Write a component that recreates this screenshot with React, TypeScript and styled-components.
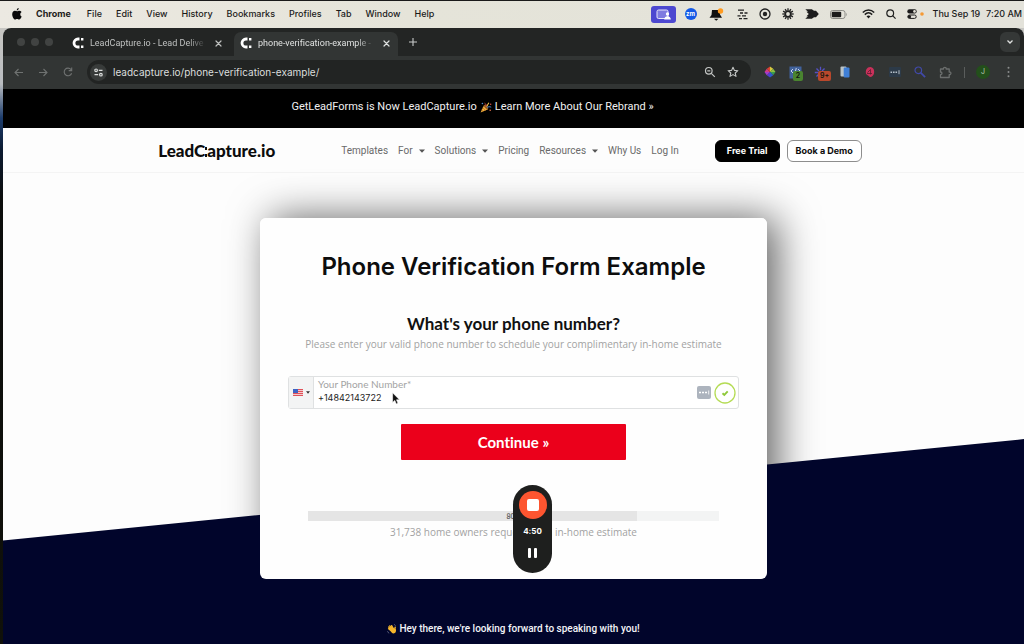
import React from "react";
import styled, { createGlobalStyle } from "styled-components";

const GlobalStyle = createGlobalStyle`
  *, *::before, *::after { box-sizing: border-box; }
  body { margin: 0; background: #0b0b0b; font-family: Inter, "Liberation Sans", sans-serif; font-variant-ligatures: none; }
  button, input { font: inherit; color: inherit; border: 0; padding: 0; background: none; }
  a { color: inherit; text-decoration: none; }
  h1, h2, p { margin: 0; }
  svg { display: block; flex: none; }
`;

const Desktop = styled.div`
  position: relative;
  min-height: 100vh;
  display: flex;
  flex-direction: column;
  background: linear-gradient(180deg, #cfccc4 0, #b9bcc0 84px, #1c3c6c 118px, #0b1a30 150px, #0c0d0c 200px, #10110a 100%);
`;

/* macOS menu bar */
const MenuBar = styled.header`
  display: flex;
  align-items: center;
  justify-content: space-between;
  height: 28px;
  padding: 0 2px 1px 12px;
  border-top: 1px solid #1a1a1a;
  background: linear-gradient(90deg, #ece9e2, #e5e4d9 40%, #e3e2da);
  color: #1b1b1a;
  font-size: 9px;
  font-weight: 500;
  line-height: 12px;
`;

const MenuItems = styled.nav`
  display: flex;
  align-items: center;
  gap: 14px;
`;

const MenuItem = styled.button<{ $app?: boolean }>`
  margin-right: ${(p) => (p.$app ? 2 : 0)}px;
  font-weight: ${(p) => (p.$app ? 700 : 500)};
`;

const StatusItems = styled.div`
  display: flex;
  align-items: center;
  gap: 11px;
`;

const ShareBadge = styled.span`
  display: grid;
  place-items: center;
  width: 25px;
  height: 17px;
  margin-right: -2px;
  border-radius: 3px;
  background: #4d48d0;
`;

const ZoomBadge = styled.span`
  display: grid;
  place-items: center;
  width: 12px;
  height: 12px;
  margin-right: 1px;
  border-radius: 50%;
  background: #1459e6;
  color: #fff;
  font-size: 6px;
  font-weight: 700;
  line-height: 8px;
`;

const Bell = styled.svg`
  margin-right: 2px;
`;

const Battery = styled.svg`
  margin-right: 3px;
`;

const Control = styled.span`
  display: flex;
  align-items: center;
  gap: 3px;
  margin-right: -2px;
`;

const Clock = styled.time`
  display: flex;
  gap: 6px;
  white-space: nowrap;
`;

/* Browser window */
const Browser = styled.div`
  display: flex;
  flex-direction: column;
  flex: 1;
  margin-left: 3px;
  border-radius: 8px 8px 0 0;
  background: #fdfdfd;
  overflow: hidden;
`;

const TabStrip = styled.div`
  display: flex;
  align-items: center;
  height: 28px;
  padding: 0 4px 0 14px;
  background: #232524;
  color: #c9cbca;
`;

const WindowDots = styled.div`
  display: flex;
  gap: 6px;
`;

const WindowDot = styled.i`
  width: 8px;
  height: 8px;
  border-radius: 50%;
  background: #414342;
`;

const Tabs = styled.div`
  display: flex;
  gap: 4px;
  margin: 4px 0 0 13px;
`;

const Tab = styled.div<{ $active?: boolean }>`
  display: flex;
  align-items: center;
  gap: 6px;
  width: 164px;
  height: 24px;
  padding: 0 6px 2px;
  border-radius: 7px 7px 0 0;
  background: ${(p) => (p.$active ? "#323534" : "transparent")};
  color: ${(p) => (p.$active ? "#dfe1e0" : "#bfc1c0")};
`;

const TabTitle = styled.span`
  flex: 1;
  overflow: hidden;
  white-space: nowrap;
  font-family: Roboto, "Liberation Sans", sans-serif;
  font-size: 9px;
  line-height: 14px;
  mask-image: linear-gradient(90deg, #000 85%, transparent);
`;

const IconButton = styled.button`
  display: grid;
  place-items: center;
  width: 12px;
  height: 12px;
`;

const NewTab = styled(IconButton)`
  margin: 0 auto 0 9px;
`;

const TabSearch = styled(IconButton)`
  width: 20px;
  height: 20px;
  border-radius: 6px;
  background: #353837;
`;

const Toolbar = styled.div`
  display: flex;
  align-items: center;
  height: 33px;
  padding: 0 9px 1px;
  background: #323534;
  color: #6f7271;
`;

const NavButtons = styled.div`
  display: flex;
  gap: 13px;
  margin-right: 13px;
`;

const Omnibox = styled.div`
  display: flex;
  align-items: center;
  flex: 1;
  gap: 11px;
  height: 24px;
  padding: 0 12px 0 3px;
  border-radius: 12px;
  background: #222423;
  color: #c4c6c5;
`;

const SiteInfo = styled.button`
  display: grid;
  place-items: center;
  width: 17px;
  height: 17px;
  border-radius: 50%;
  background: #383b3a;
`;

const Url = styled.input`
  flex: 1;
  min-width: 0;
  margin-left: -5px;
  font-size: 10px;
  line-height: 14px;
  color: #dcdedd;
  outline: 0;
`;

const Extensions = styled.div`
  display: flex;
  align-items: center;
  gap: 11px;
  margin-left: 12px;
`;

const Extension = styled.span`
  position: relative;
  display: grid;
  place-items: center;
  width: 14px;
  height: 14px;
`;

const Count = styled.span<{ $color: string }>`
  position: absolute;
  top: 6px;
  left: 5px;
  min-width: 10px;
  padding: 0 2px;
  border-radius: 2px;
  background: ${(p) => p.$color};
  color: #10150f;
  font-size: 7px;
  font-weight: 600;
  line-height: 10px;
  text-align: center;
`;

const Divider = styled.i`
  width: 1px;
  height: 11px;
  margin-left: 1px;
  background: #5a5d5c;
`;

const Avatar = styled.button`
  width: 14px;
  height: 14px;
  border-radius: 50%;
  background: #234f1b;
  color: #b5c7b0;
  font-size: 7px;
  line-height: 14px;
  text-align: center;
`;

/* Page */
const Announcement = styled.a`
  display: flex;
  align-items: center;
  justify-content: center;
  gap: 3px;
  height: 39px;
  padding: 0 82px 4px 0;
  background: #000;
  color: #f0f0f0;
  font-family: Roboto, "Liberation Sans", sans-serif;
  font-size: 11px;
  line-height: 17px;
`;

const SiteHeader = styled.header`
  height: 45px;
  border-bottom: 1px solid #f4f4f4;
`;

const HeaderInner = styled.div`
  display: flex;
  align-items: center;
  justify-content: space-between;
  width: 70%;
  min-width: 704px;
  height: 100%;
  margin: 0 auto;
  padding: 2px 9px 0 2px;
`;

const Logo = styled.a`
  display: flex;
  align-items: center;
  color: #0c0c0c;
  font-family: Lato, "Liberation Sans", sans-serif;
  font-size: 17px;
  font-weight: 900;
  line-height: 20px;
`;

const LogoDots = styled.i`
  display: flex;
  flex-direction: column;
  justify-content: space-between;
  height: 10px;
  margin-top: 2px;

  &::before, &::after {
    content: "";
    width: 2px;
    height: 3px;
    background: currentColor;
  }
`;

const SiteNav = styled.nav`
  display: flex;
  gap: 10px;
  margin-left: 30px;
  color: #6a6a6a;
  font-family: Roboto, "Liberation Sans", sans-serif;
  font-size: 10px;
  line-height: 14px;
`;

const NavLink = styled.a`
  display: flex;
  align-items: center;
  gap: 6px;
`;

const HeaderActions = styled.div`
  display: flex;
  gap: 7px;
`;

const HeaderButton = styled.button<{ $solid?: boolean }>`
  height: 22px;
  padding: 0 ${(p) => (p.$solid ? 11 : 8)}px;
  border: 1px solid ${(p) => (p.$solid ? "#000" : "#8d8d8d")};
  border-radius: 6px;
  background: ${(p) => (p.$solid ? "#000" : "#fff")};
  color: ${(p) => (p.$solid ? "#fff" : "#0c0c0c")};
  font-size: 9px;
  font-weight: 700;
  line-height: 14px;
`;

const Hero = styled.main`
  position: relative;
  isolation: isolate;
  display: flex;
  flex-direction: column;
  align-items: center;
  flex: 1;
  padding: 45px 0 7px;

  &::before {
    content: "";
    position: absolute;
    inset: 0;
    z-index: -1;
    background: #01052b;
    clip-path: polygon(0 78%, 100% 56.5%, 100% 100%, 0 100%);
  }
`;

/* The card's shadow lies on the white backdrop, below the navy slope */
const Card = styled.form`
  position: relative;
  display: flex;
  flex-direction: column;
  align-items: center;
  width: 100%;
  max-width: 507px;
  padding: 32px 28px 39px;
  border-radius: 6px;
  background: #fefefe;
  font-family: Lato, "Liberation Sans", sans-serif;

  &::after {
    content: "";
    position: absolute;
    inset: 0;
    z-index: -2;
    border-radius: 6px;
    box-shadow: 10px 0 40px rgba(0, 0, 0, 0.62);
  }
`;

const Title = styled.h1`
  color: #0d0d0d;
  font-family: Inter, "Liberation Sans", sans-serif;
  font-size: 24px;
  font-weight: 600;
  line-height: 34px;
`;

const Question = styled.h2`
  margin-top: 30px;
  color: #111;
  font-size: 17px;
  font-weight: 700;
  line-height: 20px;
`;

const Hint = styled.p`
  margin-top: 2px;
  color: #a2a2a2;
  font-family: "Open Sans", "Liberation Sans", sans-serif;
  font-size: 10px;
  line-height: 16px;
`;

const PhoneField = styled.div`
  display: flex;
  align-items: center;
  width: 100%;
  height: 33px;
  margin-top: 24px;
  padding-right: 2px;
  border: 1px solid #dfe1e2;
  border-radius: 3px;
  background: #fff;
`;

const CountryButton = styled.button`
  display: flex;
  align-items: center;
  justify-content: center;
  gap: 3px;
  align-self: stretch;
  width: 25px;
  border-right: 1px solid #dfe1e2;
  background: #f3f4f4;
`;

const PhoneText = styled.div`
  display: flex;
  flex-direction: column;
  align-self: flex-start;
  flex: 1;
  padding-left: 4px;
`;

const PhoneLabel = styled.label`
  color: #a3a3a3;
  font-size: 10px;
  line-height: 14px;
`;

const PhoneInput = styled.input`
  height: 13px;
  color: #222;
  font-family: Inter, "Liberation Sans", sans-serif;
  font-size: 9px;
  line-height: 13px;
  outline: 0;
`;

const FieldIcons = styled.div`
  display: flex;
  align-items: center;
  gap: 3px;
`;

const Continue = styled.button`
  width: 50%;
  height: 36px;
  margin-top: 15px;
  border-radius: 1px;
  background: #eb001b;
  color: #fff;
  font-size: 15px;
  font-weight: 700;
  line-height: 20px;
`;

const Progress = styled.div`
  display: grid;
  align-items: center;
  width: 91%;
  height: 10px;
  margin-top: 51px;
  background: linear-gradient(90deg, #e5e5e5 80%, #f3f4f4 80%);
  color: #666;
  font-size: 7px;
  font-weight: 700;
  line-height: 10px;
  text-align: center;
`;

const Stat = styled(Hint)`
  margin-top: 3px;
`;

const Greeting = styled.p`
  display: flex;
  align-items: center;
  gap: 2px;
  margin-top: auto;
  color: #f3f4f8;
  font-family: Roboto, "Liberation Sans", sans-serif;
  font-size: 10px;
  font-weight: 500;
  line-height: 16px;
`;

/* Floating overlays */
const Recorder = styled.div`
  position: absolute;
  top: 485px;
  left: calc(50% + 1px);
  display: flex;
  flex-direction: column;
  align-items: center;
  width: 39px;
  height: 88px;
  padding: 6px 0;
  border-radius: 20px;
  background: #1e1f1e;
  color: #fff;
  font-size: 8px;
  font-weight: 700;
  line-height: 12px;
`;

const StopButton = styled.button`
  display: grid;
  place-items: center;
  width: 28px;
  height: 28px;
  margin-bottom: 6px;
  border-radius: 50%;
  background: #fd5530;

  &::before {
    content: "";
    width: 12px;
    height: 12px;
    border-radius: 2px;
    background: #fff;
  }
`;

const PauseButton = styled.button`
  display: flex;
  gap: 3px;
  margin-top: 11px;

  &::before, &::after {
    content: "";
    width: 3px;
    height: 10px;
    border-radius: 1px;
    background: #fff;
  }
`;

const Pointer = styled.svg`
  position: absolute;
  top: 392px;
  left: calc(50% - 120px);
`;

const Close = () => (
  <svg width="7" height="7" viewBox="0 0 7 7" stroke="currentColor" strokeWidth="1.2" strokeLinecap="round">
    <path d="M1 1l5 5M6 1L1 6" />
  </svg>
);

const Favicon = () => (
  <svg width="12" height="12" viewBox="0 0 12 12">
    <path d="M7.5 0.6H6a5.4 5.4 0 0 0 0 10.8h1.5V8.6H6a2.6 2.6 0 0 1 0-5.2h1.5z" fill="#fff" />
    <path d="M9 1h2.4v2.4H9zM9 8.6h2.4V11H9z" fill="#fff" />
  </svg>
);

const Caret = () => (
  <svg width="6" height="4" viewBox="0 0 6 4">
    <path d="M0 0.4h6L3 3.7z" fill="#555" />
  </svg>
);

const Party = () => (
  <svg width="12" height="12" viewBox="0 0 12 12">
    <path d="M0.6 11.4L4 4.2l4 4z" fill="#f2b23a" />
    <path d="M1.7 9l1.5 1.4M2.8 6.8l2.8 2.7" stroke="#c9762b" strokeWidth="0.9" />
    <ellipse cx="6" cy="6.1" rx="1.2" ry="2.9" transform="rotate(-45 6 6.1)" fill="#9b5d24" />
    <path d="M6.2 5.4c.2-1.6-.4-2.4-1.5-3.2" stroke="#e3554a" fill="none" strokeWidth="1" />
    <path d="M6.9 5.6c.5-1.8 1.2-2.6 2-3.9" stroke="#f4c44c" fill="none" strokeWidth="1.1" />
    <path d="M7.2 6.4c1.5-.9 2.7-.8 4-.2" stroke="#4d8fd8" fill="none" strokeWidth="1" />
    <circle cx="2.4" cy="2.5" r=".8" fill="#4d8fd8" />
    <circle cx="10.7" cy="3.3" r=".7" fill="#e3554a" />
    <circle cx="10.2" cy="9.2" r=".8" fill="#e3704a" />
  </svg>
);

const Wave = () => (
  <svg width="10" height="10" viewBox="0 0 10 10">
    <g stroke="#f5b62c" strokeWidth="1.4" strokeLinecap="round">
      <path d="M5 6L1.7 2.9M5.6 5.2L2.8 1.9M6.4 4.8L4.6 1.7M4.4 7L1.6 4.8M7.8 5.6l.4-2.5" />
    </g>
    <path d="M3.4 6.2L6 3.8l2.8 1.4c.7 2.2-.3 4.1-2.2 4.3-1.5.1-2.6-1.5-3.2-3.3z" fill="#f5b62c" />
    <path d="M.5 7.2c.2 1 .8 1.7 1.700 2M7 .5c.8.2 1.3.6 1.6 1.2" stroke="#8b8fa8" strokeWidth=".6" fill="none" />
  </svg>
);

const Apple = () => (
  <svg width="10" height="12" viewBox="0 0 10 12" fill="#0a0a0a">
    <path d="M6.7 0c.1 1.2-.8 2.4-2 2.5C4.6 1.3 5.6.2 6.7 0zM8.3 6.3c0-1.1.6-1.8 1.3-2.3-.6-.8-1.4-1.2-2.3-1.2-1 0-1.5.5-2.2.5-.7 0-1.3-.5-2.2-.5C1.4 2.8.2 4.1.2 6.3c0 2.4 1.5 5.3 2.9 5.3.7 0 1.1-.5 2-.5s1.2.5 2 .5c1.1 0 2.1-1.7 2.6-3-.9-.4-1.4-1.2-1.4-2.3z" />
  </svg>
);

const menus = ["File", "Edit", "View", "History", "Bookmarks", "Profiles", "Tab", "Window", "Help"];

const links: { label: string; menu?: boolean }[] = [
  { label: "Templates" },
  { label: "For", menu: true },
  { label: "Solutions", menu: true },
  { label: "Pricing" },
  { label: "Resources", menu: true },
  { label: "Why Us" },
  { label: "Log In" },
];

const rays = [0, 45, 90, 135, 180, 225, 270, 315];
const fineRays = [0, 30, 60, 90, 120, 150, 180, 210, 240, 270, 300, 330];

const StatusIcons = () => (
  <StatusItems>
    <ShareBadge>
      <svg width="15" height="11" viewBox="0 0 15 11">
        <rect x="1" y="1" width="11" height="8.5" rx="1.5" fill="#7f7be0" stroke="#e8e7fb" />
        <circle cx="11.5" cy="5" r="1.7" fill="#fff" />
        <path d="M8.2 10.5c0-2 1.3-3.3 3.3-3.3s3.3 1.3 3.3 3.3z" fill="#fff" />
      </svg>
    </ShareBadge>
    <ZoomBadge>zm</ZoomBadge>
    <Bell width="15" height="13" viewBox="0 0 15 13">
      <path d="M3 2h8v4.5L13 9.7H.5L2.500 7z" fill="#111" />
      <path d="M5 10.8h4.5L7.2 12.8z" fill="#111" />
      <circle cx="11.5" cy="3" r="2.7" fill="#ff9a1f" />
    </Bell>
    <svg width="11" height="11" viewBox="0 0 11 11" stroke="#222" strokeWidth="1.3">
      <path d="M1 1.2h6M3 4h3M7.5 4H10.5M.5 6.8h3M5 6.8h4M2 9.7h3M6.5 9.7h4" />
    </svg>
    <svg width="12" height="12" viewBox="0 0 12 12">
      <circle cx="6" cy="6" r="5" fill="none" stroke="#222" strokeWidth="1.3" />
      <circle cx="6" cy="6" r="2.2" fill="#222" />
    </svg>
    <svg width="12" height="12" viewBox="0 0 12 12" fill="none" stroke="#222" strokeWidth="1.3">
      <circle cx="6" cy="6" r="2.7" strokeWidth="1.6" />
      {fineRays.map((a) => (
        <path key={a} d="M6 .3v3" transform={`rotate(${a} 6 6)`} />
      ))}
    </svg>
    <svg width="14" height="10" viewBox="0 0 14 10" fill="#1c1c1c">
      <path d="M.3.3h6.5l2.2 1.5h2L13.8 5 11 8.2H9L6.8 9.7H.3L3 7.3H1.5L3.8 5 1.5 2.7H3z" />
    </svg>
    <Battery width="18" height="9" viewBox="0 0 18 9">
      <rect x=".5" y=".5" width="14.5" height="8" rx="2.2" fill="none" stroke="#8a8a85" />
      <rect x="1.7" y="1.7" width="9.5" height="5.6" rx="1" fill="#1c1c1c" />
      <path d="M16.300 3v3c.9-.3.9-2.7 0-3z" fill="#8a8a85" />
    </Battery>
    <svg width="13" height="10" viewBox="0 0 13 10" fill="none" stroke="#1c1c1c" strokeWidth="1.5">
      <path d="M.8 3.5c3.3-3.200 8.1-3.200 11.4 0M2.8 5.6c2.2-2.1 5.2-2.1 7.4 0" />
      <path d="M4.5 7.3c1.2-1 2.8-1 4 0l-2 2.2z" fill="#1c1c1c" stroke="none" />
    </svg>
    <svg width="10" height="10" viewBox="0 0 10 10" fill="none" stroke="#222" strokeWidth="1.2">
      <circle cx="4.2" cy="4.2" r="3.4" />
      <path d="M6.8 6.8l2.8 2.8" />
    </svg>
    <Control>
      <svg width="10" height="10" viewBox="0 0 10 10">
        <rect x=".3" y=".3" width="9.4" height="4.2" rx="2.1" fill="#1c1c1c" />
        <circle cx="7.5" cy="2.4" r="1.3" fill="#e4e3da" />
        <rect x=".8" y="6" width="8.4" height="3.4" rx="1.7" fill="none" stroke="#1c1c1c" />
        <circle cx="2.5" cy="7.7" r="1.6" fill="#1c1c1c" />
      </svg>
      <svg width="4" height="4" viewBox="0 0 4 4">
        <circle cx="2" cy="2" r="1.8" fill="#f59a35" />
      </svg>
    </Control>
    <Clock>
      <span>Thu Sep 19</span>
      <span>7:20 AM</span>
    </Clock>
  </StatusItems>
);

const ExtensionIcons = () => (
  <Extensions>
    <Extension>
      <svg width="12" height="12" viewBox="0 0 12 12">
        <path d="M6 6V.5L9.2 2.8z" fill="#d8c840" />
        <path d="M6 6l3.2-3.2L11.5 6z" fill="#8dc043" />
        <path d="M6 6h5.5L9.2 9.2z" fill="#3a9b50" />
        <path d="M6 6l3.2 3.2L6 11.5z" fill="#3159d0" />
        <path d="M6 6v5.5L2.8 9.2z" fill="#4f3ed0" />
        <path d="M6 6L2.8 9.2.5 6z" fill="#a43cc8" />
        <path d="M6 6H.5L2.8 2.8z" fill="#cf3a88" />
        <path d="M6 6L2.8 2.8 6 .5z" fill="#d9432f" />
      </svg>
    </Extension>
    <Extension>
      <svg width="13" height="13" viewBox="0 0 13 13">
        <rect x=".5" y=".5" width="12" height="12" fill="#41629c" />
        <path d="M4 3L2 5l2 2M9 3l2 2-2 2M7.3 2L5.7 8" stroke="#c9d4e8" fill="none" />
      </svg>
      <Count $color="#4a8430">2</Count>
    </Extension>
    <Extension>
      <svg width="13" height="13" viewBox="0 0 13 13" stroke="#5551c4" strokeWidth="1.3">
        {rays.map((a) => (
          <path key={a} d="M6.5 .8v3.5" transform={`rotate(${a} 6.5 6.5)`} />
        ))}
      </svg>
      <Count $color="#b8482c">9+</Count>
    </Extension>
    <Extension>
      <svg width="10" height="12" viewBox="0 0 10 12">
        <rect x=".5" y=".5" width="6" height="10" rx="1" fill="#b9c3c8" />
        <rect x="3.7" y="1.5" width="5.8" height="10" rx="1" fill="#3f7fd6" />
      </svg>
    </Extension>
    <Extension>
      <svg width="10" height="12" viewBox="0 0 10 12">
        <path d="M3 1.5C5 .3 8 1 8.8 3.5c.8 2.6.3 5-1.3 6.6-1.3 1.3-3 1.2-3.8 0L1 8C.5 5 1 2.8 3 1.5z" fill="#c9315a" />
        <path d="M2 7.5h5M5.5 3.5v5M5.5 3.5L2.5 6.5" stroke="#5c1c32" fill="none" strokeWidth=".8" />
      </svg>
    </Extension>
    <Extension>
      <svg width="12" height="10" viewBox="0 0 12 10">
        <rect width="12" height="10" rx="1" fill="#2c3a48" />
        <path d="M1.5 5.2h1.6M4 5.2h1.6M6.5 5.2h1.6" stroke="#b4bfc8" strokeWidth="1.6" />
        <path d="M10 3.2v4" stroke="#b4bfc8" />
      </svg>
    </Extension>
    <Extension>
      <svg width="12" height="12" viewBox="0 0 12 12" fill="none" stroke="#4149a8">
        <circle cx="4.3" cy="4.3" r="3.3" strokeWidth="1.2" />
        <path d="M6.9 6.9l4.2 4.2" strokeWidth="1.8" />
      </svg>
    </Extension>
    <Extension>
      <svg width="13" height="13" viewBox="0 0 13 13" fill="none" stroke="#6b6e6d" strokeWidth="1.3" strokeLinejoin="round">
        <path d="M1.5 3h3c-.3-2.3 3-2.3 2.700 0h3v3c2.3-.3 2.3 3 0 2.7v2.8H1.500V8.7c2-.2 2-2.5 0-2.7z" />
      </svg>
    </Extension>
    <Divider />
    <Avatar type="button">J</Avatar>
    <Extension>
      <svg width="3" height="12" viewBox="0 0 3 12" fill="#8a8d8c">
        <circle cx="1.5" cy="1.8" r="1" />
        <circle cx="1.5" cy="6" r="1" />
        <circle cx="1.5" cy="10.2" r="1" />
      </svg>
    </Extension>
  </Extensions>
);

export default function App() {
  return (
    <Desktop>
      <GlobalStyle />
      <MenuBar>
        <MenuItems>
          <Apple />
          <MenuItem $app>Chrome</MenuItem>
          {menus.map((m) => (
            <MenuItem key={m}>{m}</MenuItem>
          ))}
        </MenuItems>
        <StatusIcons />
      </MenuBar>

      <Browser>
        <TabStrip>
          <WindowDots>
            <WindowDot />
            <WindowDot />
            <WindowDot />
          </WindowDots>
          <Tabs>
            <Tab>
              <Favicon />
              <TabTitle>LeadCapture.io - Lead Delive</TabTitle>
              <IconButton aria-label="Close tab"><Close /></IconButton>
            </Tab>
            <Tab $active>
              <Favicon />
              <TabTitle>phone-verification-example -</TabTitle>
              <IconButton aria-label="Close tab"><Close /></IconButton>
            </Tab>
          </Tabs>
          <NewTab aria-label="New tab">
            <svg width="8" height="8" viewBox="0 0 8 8" stroke="currentColor" strokeWidth="1.1">
              <path d="M4 0v8M0 4h8" />
            </svg>
          </NewTab>
          <TabSearch aria-label="Search tabs">
            <svg width="6" height="4" viewBox="0 0 6 4" fill="none" stroke="#dfe1e0" strokeWidth="1.3">
              <path d="M.5.5L3 3 5.5.5" />
            </svg>
          </TabSearch>
        </TabStrip>

        <Toolbar>
          <NavButtons>
            <IconButton aria-label="Back">
              <svg width="9" height="9" viewBox="0 0 9 9" fill="none" stroke="currentColor" strokeWidth="1.1">
                <path d="M9 4.5H1M4.5 1L1 4.5 4.5 8" />
              </svg>
            </IconButton>
            <IconButton aria-label="Forward">
              <svg width="9" height="9" viewBox="0 0 9 9" fill="none" stroke="currentColor" strokeWidth="1.1">
                <path d="M0 4.5h8M4.5 1L8 4.5 4.5 8" />
              </svg>
            </IconButton>
            <IconButton aria-label="Reload">
              <svg width="10" height="10" viewBox="0 0 10 10" fill="none" stroke="currentColor" strokeWidth="1.1">
                <path d="M8.6 6.2A3.8 3.8 0 1 1 8 2.6M8.7.6v3H5.7" />
              </svg>
            </IconButton>
          </NavButtons>
          <Omnibox>
            <SiteInfo aria-label="Site information">
              <svg width="9" height="9" viewBox="0 0 9 9" fill="none" stroke="#dcdedd" strokeWidth="1.2">
                <circle cx="2.1" cy="2.3" r="1.3" />
                <path d="M4.8 2.3h3.7M.5 6.7h3.7" />
                <circle cx="6.9" cy="6.7" r="1.3" />
              </svg>
            </SiteInfo>
            <Url aria-label="Address" defaultValue="leadcapture.io/phone-verification-example/" />
            <svg width="12" height="12" viewBox="0 0 12 12" fill="none" stroke="currentColor" strokeWidth="1.2">
              <circle cx="4.8" cy="4.8" r="3.3" />
              <path d="M7.3 7.3l3.5 3.5M3.3 4.8h3" />
            </svg>
            <svg width="12" height="12" viewBox="0 0 12 12" fill="none" stroke="currentColor" strokeWidth="1.1" strokeLinejoin="round">
              <path d="M6 1.2l1.4 3.2 3.5.3-2.7 2.3.8 3.4L6 8.6l-3 1.8.8-3.4L1.1 4.7l3.5-.3z" />
            </svg>
          </Omnibox>
          <ExtensionIcons />
        </Toolbar>

        <Announcement href="#">
          GetLeadForms is Now LeadCapture.io <Party /> Learn More About Our Rebrand »
        </Announcement>

        <SiteHeader>
          <HeaderInner>
            <Logo href="#">
              LeadC<LogoDots />apture.io
            </Logo>
            <SiteNav>
              {links.map((l) => (
                <NavLink key={l.label} href="#">
                  {l.label}
                  {l.menu && <Caret />}
                </NavLink>
              ))}
            </SiteNav>
            <HeaderActions>
              <HeaderButton $solid>Free Trial</HeaderButton>
              <HeaderButton>Book a Demo</HeaderButton>
            </HeaderActions>
          </HeaderInner>
        </SiteHeader>

        <Hero>
          <Card onSubmit={(e) => e.preventDefault()}>
            <Title>Phone Verification Form Example</Title>
            <Question>What's your phone number?</Question>
            <Hint>Please enter your valid phone number to schedule your complimentary in-home estimate</Hint>
            <PhoneField>
              <CountryButton type="button" aria-label="Country">
                <svg width="10" height="7" viewBox="0 0 10 7">
                  <rect width="10" height="7" fill="#f3c9cc" />
                  <path d="M0 .5h10M0 2.5h10M0 4.5h10M0 6.5h10" stroke="#e0525a" />
                  <rect width="5" height="4" fill="#3d63c4" />
                </svg>
                <svg width="4" height="3" viewBox="0 0 4 3">
                  <path d="M0 .3h4L2 2.8z" fill="#333" />
                </svg>
              </CountryButton>
              <PhoneText>
                <PhoneLabel htmlFor="phone">Your Phone Number*</PhoneLabel>
                <PhoneInput id="phone" type="tel" defaultValue="+14842143722" />
              </PhoneText>
              <FieldIcons>
                <svg width="14" height="13" viewBox="0 0 14 13">
                  <rect width="14" height="13" rx="2" fill="#adb4be" />
                  <path d="M2 6.5h2M5 6.5h2M8 6.5h2" stroke="#fff" strokeWidth="1.6" />
                  <path d="M11.7 4.5v4" stroke="#fff" strokeWidth=".8" />
                </svg>
                <svg width="22" height="22" viewBox="0 0 22 22" fill="none">
                  <circle cx="11" cy="11" r="10" stroke="#b5dc55" strokeWidth="1.3" />
                  <path d="M8.5 11.3l1.8 1.6 3.4-3.5" stroke="#8fc93a" strokeWidth="1.9" />
                </svg>
              </FieldIcons>
            </PhoneField>
            <Continue type="submit">Continue »</Continue>
            <Progress role="progressbar" aria-valuenow={80}>80%</Progress>
            <Stat>31,738 home owners requested an in-home estimate</Stat>
          </Card>
          <Greeting>
            <Wave /> Hey there, we're looking forward to speaking with you!
          </Greeting>
        </Hero>
      </Browser>

      <Pointer width="8" height="13" viewBox="0 0 8 13">
        <path d="M.6.8v9.6l2.2-2 1.5 3.6 1.7-.7-1.5-3.5h3z" fill="#111" stroke="#fff" strokeWidth=".6" />
      </Pointer>
      <Recorder>
        <StopButton aria-label="Stop recording" />
        <span>4:50</span>
        <PauseButton aria-label="Pause recording" />
      </Recorder>
    </Desktop>
  );
}
